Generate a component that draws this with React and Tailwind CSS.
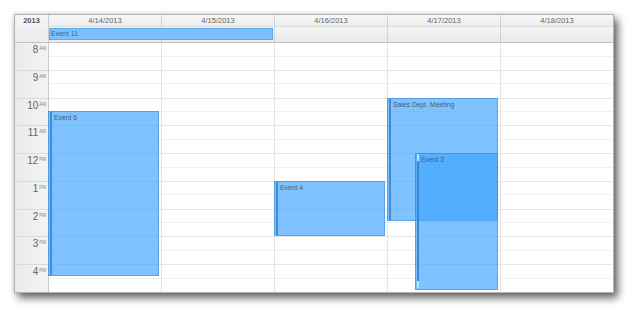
import React from "react";

const HOUR = 27.75;

const hours = [
  ["8", "AM"],
  ["9", "AM"],
  ["10", "AM"],
  ["11", "AM"],
  ["12", "PM"],
  ["1", "PM"],
  ["2", "PM"],
  ["3", "PM"],
  ["4", "PM"],
];

const days = ["4/14/2013", "4/15/2013", "4/16/2013", "4/17/2013", "4/18/2013"];

// start / end in hours after 8 AM
const events = [
  { id: 6, day: 0, text: "Event 6", start: 2.5, end: 8.45, left: -1, width: 111 },
  { id: 4, day: 2, text: "Event 4", start: 5, end: 7, left: -1, width: 111 },
  { id: 1, day: 3, text: "Sales Dept. Meeting", start: 2, end: 6.45, left: -1, width: 111 },
  { id: 3, day: 3, text: "Event 3", start: 4, end: 8.95, left: 27, width: 83, partial: true },
];

const Event = ({ ev }) => (
  <div
    className="absolute border border-[rgba(35,125,215,0.45)] bg-[rgba(65,165,255,0.68)] z-10"
    style={{ top: ev.start * HOUR - 1, height: (ev.end - ev.start) * HOUR, left: ev.left, width: ev.width }}
  >
    {ev.partial ? (
      <div className="absolute left-[1px] top-0 bottom-[1px] w-[2px] bg-[#c4e0f7]">
        <div className="absolute left-0 right-0 top-[7px] bottom-[7px] bg-[#3d86c8]" />
      </div>
    ) : (
      <div className="absolute left-[1px] top-0 bottom-0 w-[2px] bg-[#3d86c8]/90" />
    )}
    <div className="pl-[5px] pt-[2px] text-[6.8px] leading-[8px] text-[#4d5e70] whitespace-nowrap">
      {ev.text}
    </div>
  </div>
);

const DayColumn = ({ index, last }) => (
  <div
    className={
      last ? "relative w-[112px]" : "relative w-[113px] border-r border-[#e4e4e4]"
    }
  >
    {hours.map((h) => (
      <div key={h[0]} className="h-[27.75px] border-b border-[#e6e6e6] flex flex-col">
        <div className="h-[13.5px] border-b border-[#f1f1f1]" />
      </div>
    ))}
    {events
      .filter((ev) => ev.day === index)
      .map((ev) => (
        <Event key={ev.id} ev={ev} />
      ))}
  </div>
);

export default function App() {
  return (
    <div
      className="w-[632px] h-[311px] bg-white pl-[14px] pt-[14px]"
      style={{ fontFamily: '"Liberation Sans", Arial, sans-serif' }}
    >
      <div className="w-[600px] h-[279px] border border-[#b2b2b2] bg-white flex flex-col overflow-hidden shadow-[4px_5px_8px_rgba(0,0,0,0.6),0_0_4px_rgba(0,0,0,0.15)]">
        {/* header */}
        <div className="flex h-[28px] border-b border-[#c3c3c3]">
          <div className="w-[34px] border-r border-[#cfcfcf] bg-gradient-to-b from-[#f6f6f6] to-[#ebebeb] flex justify-center pt-[1px]">
            <span className="text-[7.5px] leading-[10px] font-bold text-[#555]">2013</span>
          </div>
          <div className="flex flex-col flex-1">
            <div className="flex h-[12px] border-b border-[#dcdcdc] bg-gradient-to-b from-[#f8f8f8] to-[#ececec]">
              {days.map((d, i) => (
                <div
                  key={d}
                  className={
                    i === 4
                      ? "w-[112px] flex justify-center"
                      : "w-[113px] border-r border-[#d2d2d2] flex justify-center"
                  }
                >
                  <span className="text-[7.5px] leading-[11px] text-[#666]">{d}</span>
                </div>
              ))}
            </div>
            <div className="relative flex flex-1 bg-gradient-to-b from-[#f4f4f4] to-[#e9e9e9]">
              {days.map((d, i) => (
                <div
                  key={d}
                  className={i === 4 ? "w-[112px]" : "w-[113px] border-r border-[#d2d2d2]"}
                />
              ))}
              <div className="absolute left-0 top-[1px] w-[224px] h-[12px] border border-[#5aa9ea] bg-[#7cc1fe] z-10">
                <div className="pl-[1px] text-[7px] leading-[10px] text-[#4d5e70]">Event 11</div>
              </div>
            </div>
          </div>
        </div>

        {/* body */}
        <div className="flex flex-1 overflow-hidden">
          <div className="w-[34px] border-r border-[#cbcbcb] bg-gradient-to-r from-[#ebebeb] to-[#f3f3f3]">
            {hours.map((h) => (
              <div
                key={h[0]}
                className="h-[27.75px] border-b border-[#dadada] flex justify-end pr-[2px] pt-[2px]"
              >
                <span className="text-[10px] leading-[10px] text-[#666]">{h[0]}</span>
                <span className="ml-[1px] mt-[1px] text-[4.5px] leading-[5px] text-[#888]">
                  {h[1]}
                </span>
              </div>
            ))}
          </div>
          {days.map((d, i) => (
            <DayColumn key={d} index={i} last={i === 4} />
          ))}
        </div>
      </div>
    </div>
  );
}
